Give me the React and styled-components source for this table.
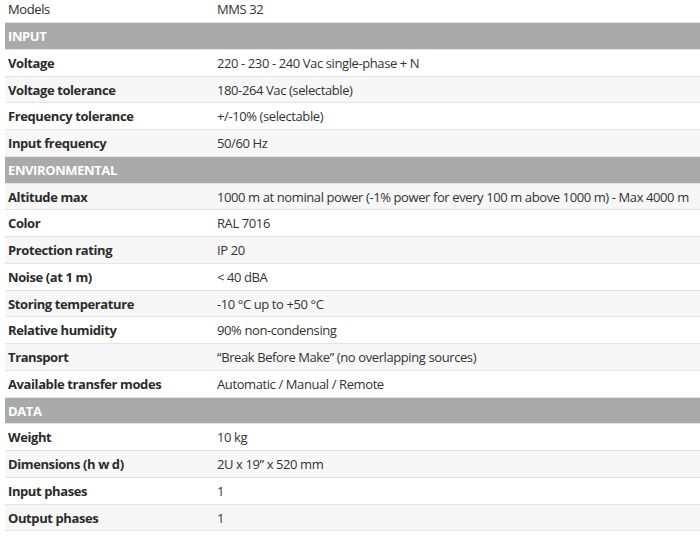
import styled, { createGlobalStyle } from "styled-components";

const GlobalStyle = createGlobalStyle`
  body {
    margin: 0;
    background: #fff;
    font-family: "Open Sans", "Noto Sans", "Liberation Sans", sans-serif;
  }
`;

const Table = styled.div`
  margin-top: -3.6px;
  padding-left: 5px;
  font-size: 13px;
  letter-spacing: -0.4px;
  color: #333;
`;

const Row = styled.div`
  display: grid;
  grid-template-columns: 209px 1fr;
  align-items: center;
  height: 26.75px;
  box-sizing: border-box;
  border-bottom: 1px solid #e4e4e4;
  background: ${(props) => (props.$shaded ? "#f7f7f7" : "#fff")};
  white-space: nowrap;
`;

const Label = styled.div`
  padding-left: 3px;
  font-weight: ${(props) => (props.$plain ? 400 : 700)};
  color: #2b2b2b;
`;

const Value = styled.div`
  padding-left: 3px;
`;

const Section = styled.div`
  height: 26.75px;
  box-sizing: border-box;
  display: flex;
  align-items: center;
  padding-left: 3px;
  background: #aaaaaa;
  border-bottom: 1px solid #e4e4e4;
  color: #fff;
  font-weight: 700;
  text-transform: uppercase;
`;

const rows = [
  { type: "model", label: "Models", value: "MMS 32" },
  { type: "section", label: "Input" },
  { label: "Voltage", value: "220 - 230 - 240 Vac single-phase + N" },
  { label: "Voltage tolerance", value: "180-264 Vac (selectable)" },
  { label: "Frequency tolerance", value: "+/-10% (selectable)" },
  { label: "Input frequency", value: "50/60 Hz" },
  { type: "section", label: "Environmental" },
  {
    label: "Altitude max",
    value:
      "1000 m at nominal power (-1% power for every 100 m above 1000 m) - Max 4000 m",
  },
  { label: "Color", value: "RAL 7016" },
  { label: "Protection rating", value: "IP 20" },
  { label: "Noise (at 1 m)", value: "< 40 dBA" },
  { label: "Storing temperature", value: "-10 °C up to +50 °C" },
  { label: "Relative humidity", value: "90% non-condensing" },
  { label: "Transport", value: "\u201cBreak Before Make\u201d (no overlapping sources)" },
  { label: "Available transfer modes", value: "Automatic / Manual / Remote" },
  { type: "section", label: "Data" },
  { label: "Weight", value: "10 kg" },
  { label: "Dimensions (h w d)", value: "2U x 19\u201d x 520 mm" },
  { label: "Input phases", value: "1" },
  { label: "Output phases", value: "1" },
];

const App = () => {
  return (
    <>
      <GlobalStyle />
      <Table>
        {rows.map((row, i) =>
          row.type === "section" ? (
            <Section key={row.label}>{row.label}</Section>
          ) : (
            <Row key={row.label} $shaded={i % 2 === 1}>
              <Label $plain={row.type === "model"}>{row.label}</Label>
              <Value>{row.value}</Value>
            </Row>
          )
        )}
      </Table>
    </>
  );
};

export default App;
